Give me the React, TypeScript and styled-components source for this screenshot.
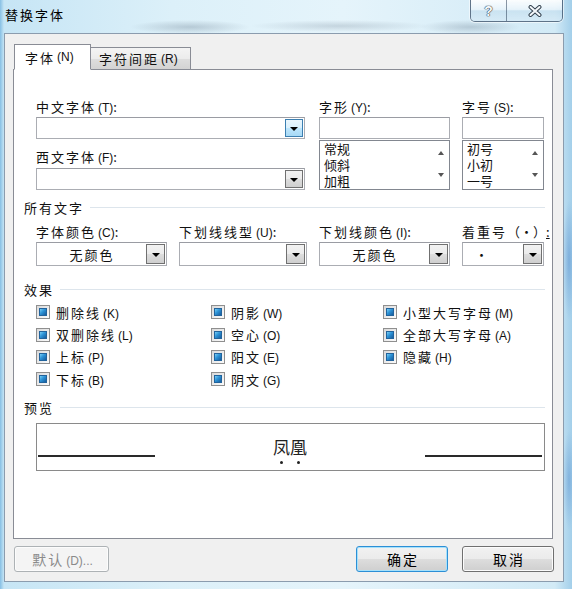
import React from 'react'
import styled, { createGlobalStyle } from 'styled-components'

const GlobalStyle = createGlobalStyle`
	* { box-sizing: border-box; }
	html, body { margin: 0; padding: 0; }
	body {
		font-family: 'Noto Sans CJK SC', 'Liberation Sans', sans-serif;
		color: #111;
		background: #cfe9f6;
	}
`

const Window = styled.div`
	width: 572px;
	height: 589px;
	display: flex;
	flex-direction: column;
	padding: 0 8px 7px 4px;
	overflow: hidden;
	background:
		radial-gradient(ellipse 60px 7px at 190px 27px, rgba(80, 100, 120, 0.28), transparent),
		radial-gradient(ellipse 90px 6px at 340px 26px, rgba(80, 100, 120, 0.22), transparent),
		radial-gradient(ellipse 50px 7px at 470px 27px, rgba(80, 100, 120, 0.26), transparent),
		radial-gradient(ellipse 6px 60px at 569px 260px, rgba(70, 130, 200, 0.45), transparent),
		radial-gradient(ellipse 6px 50px at 569px 480px, rgba(70, 130, 200, 0.4), transparent),
		linear-gradient(90deg, #86bfe4 0, #c6e5f5 4px, #dcf0f9 30%, #e5f4fb 60%, #d2eaf6 97%, #a3cfea 100%);
`

const TitleBar = styled.div`
	height: 33px;
	flex: none;
	display: flex;
	justify-content: space-between;
	align-items: flex-start;
`

const Title = styled.div`
	padding: 6px 0 0 1px;
	font-size: 13px;
	line-height: 18px;
	letter-spacing: 2px;
	color: #000;
`

const CaptionGroup = styled.div`
	display: flex;
	height: 22px;
	margin-right: 1px;
	border: 1px solid rgba(45, 65, 90, 0.7);
	border-top: none;
	border-radius: 0 0 5px 5px;
	overflow: hidden;
	box-shadow: 0 0 0 1px rgba(255, 255, 255, 0.55);
`

const CaptionButton = styled.div<{ $w: number }>`
	width: ${p => p.$w}px;
	display: flex;
	align-items: center;
	justify-content: center;
	background: linear-gradient(180deg, rgba(255, 255, 255, 0.9) 0%, rgba(236, 245, 251, 0.75) 45%, rgba(196, 222, 238, 0.65) 52%, rgba(214, 234, 246, 0.75) 100%);
	& + & { border-left: 1px solid rgba(45, 65, 90, 0.55); }
`

const HelpGlyph = styled.span`
	font-family: 'Liberation Sans', sans-serif;
	font-weight: bold;
	font-size: 14px;
	line-height: 14px;
	color: #f7fafc;
	text-shadow: 0 0 1px #2e3b48, 0 0 1px #2e3b48, 0 0 1px #2e3b48;
`

const Client = styled.div`
	flex: 1;
	display: flex;
	flex-direction: column;
	border: 1px solid #8b9cae;
	background: #f0f0f0;
	padding: 10px 10px 9px 8px;
`

const TabStrip = styled.div`
	height: 26px;
	flex: none;
	display: flex;
	align-items: flex-end;
	padding-left: 1px;
	margin-bottom: -1px;
	position: relative;
	z-index: 1;
`

const Tab = styled.div<{ $active?: boolean }>`
	width: ${p => (p.$active ? 77 : 101)}px;
	height: ${p => (p.$active ? 26 : 22)}px;
	margin-left: ${p => (p.$active ? 0 : -1)}px;
	margin-bottom: ${p => (p.$active ? 0 : 1)}px;
	padding-left: ${p => (p.$active ? 10 : 8)}px;
	display: flex;
	align-items: center;
	border: 1px solid #898c95;
	border-bottom: ${p => (p.$active ? '1px solid #fff' : 'none')};
	background: ${p => (p.$active ? '#fff' : 'linear-gradient(180deg, #f4f4f4 0%, #ececec 50%, #dedede 51%, #d3d3d3 100%)')};
	font-size: 13px;
	letter-spacing: 2px;
	white-space: nowrap;
`

const Panel = styled.div`
	flex: 1;
	display: flex;
	flex-direction: column;
	background: #fff;
	border: 1px solid #898c95;
	padding: 28px 7px 0 10px;
`

const FontGrid = styled.div`
	margin-left: 12px;
	display: grid;
	grid-template-columns: 271px 131px 82px;
	column-gap: 12px;
`

const Stack = styled.div`
	display: flex;
	flex-direction: column;
`

const FieldLabel = styled.div<{ $top?: number }>`
	height: 18px;
	line-height: 18px;
	margin-top: ${p => p.$top ?? 0}px;
	font-size: 13px;
	letter-spacing: 2px;
	white-space: nowrap;
`

const Key = styled.span`
	font-family: 'Liberation Sans', sans-serif;
	font-size: 12px;
	letter-spacing: 0;
	margin-left: 2px;
`

const Tight = styled.span`
	letter-spacing: 0;
`

const Underlined = styled.span`
	text-decoration: underline;
`

const Combo = styled.div<{ $w?: number; $h: number; $top?: number }>`
	width: ${p => (p.$w ? `${p.$w}px` : 'auto')};
	height: ${p => p.$h}px;
	margin-top: ${p => p.$top ?? 1}px;
	display: flex;
	align-items: stretch;
	border: 1px solid #abadb3;
	border-top-color: #9a9ca3;
	background: #fff;
`

const ComboText = styled.div<{ $center?: boolean }>`
	flex: 1;
	display: flex;
	align-items: center;
	justify-content: ${p => (p.$center ? 'center' : 'flex-start')};
	padding-left: ${p => (p.$center ? 2 : 12)}px;
	font-size: 13px;
	letter-spacing: 2px;
`

const DropButton = styled.div<{ $hot?: boolean; $w?: number }>`
	width: ${p => p.$w ?? 19}px;
	margin: 1px;
	display: flex;
	align-items: center;
	justify-content: center;
	border: 1px solid ${p => (p.$hot ? '#3c7fb1' : '#707070')};
	background: ${p =>
		p.$hot
			? 'linear-gradient(180deg, #eaf6fd 0%, #d9f0fc 50%, #bee6fd 51%, #a7d9f5 100%)'
			: 'linear-gradient(180deg, #f2f2f2 0%, #ebebeb 50%, #dddddd 51%, #cfcfcf 100%)'};
	&::after {
		content: '';
		margin-top: 1px;
		border-left: 4px solid transparent;
		border-right: 4px solid transparent;
		border-top: 4px solid #000;
	}
`

const TextBox = styled.div`
	height: 22px;
	margin-top: 1px;
	border: 1px solid #abadb3;
	border-top-color: #9a9ca3;
	background: #fff;
`

const ListBox = styled.div`
	height: 50px;
	margin-top: 1px;
	display: flex;
	border: 1px solid #828790;
	background: #fff;
`

const ListItems = styled.div`
	flex: 1;
	padding: 0 0 0 4px;
	font-size: 13px;
	line-height: 16px;
	overflow: hidden;
`

const ScrollColumn = styled.div`
	width: 17px;
	display: flex;
	flex-direction: column;
	justify-content: space-between;
	align-items: center;
	padding: 10px 0 12px;
`

const ScrollArrow = styled.span<{ $up?: boolean }>`
	border-left: 3.5px solid transparent;
	border-right: 3.5px solid transparent;
	${p => (p.$up ? 'border-bottom' : 'border-top')}: 4px solid #555;
`

const SectionHeader = styled.div<{ $top: number }>`
	height: 20px;
	margin-top: ${p => p.$top}px;
	display: flex;
	align-items: center;
	font-size: 13px;
	letter-spacing: 2px;
	&::after {
		content: '';
		flex: 1;
		height: 1px;
		margin-left: 6px;
		background: #dde5ec;
	}
`

const ColorGrid = styled.div`
	margin: 6px 0 0 12px;
	display: grid;
	grid-template-columns: 131px 128px 131px 82px;
	column-gap: 12px;
`

const EffectsGrid = styled.div`
	margin: 2px 0 0 12px;
	display: grid;
	grid-auto-flow: column;
	grid-template-rows: repeat(4, 22.4px);
	grid-template-columns: 175px 172px auto;
`

const CheckItem = styled.label`
	display: flex;
	align-items: center;
	gap: 6px;
	font-size: 13px;
	letter-spacing: 2px;
	white-space: nowrap;
`

const CheckBox = styled.span`
	width: 14px;
	height: 14px;
	flex: none;
	display: flex;
	padding: 2px;
	border: 1px solid #8f8f8f;
	background: linear-gradient(135deg, #d9d9d9, #fbfbfb);
	&::after {
		content: '';
		flex: 1;
		border: 1px solid #22639c;
		background: linear-gradient(135deg, #79cff5 0%, #2c92d6 45%, #185c9c 100%);
	}
`

const PreviewBox = styled.div`
	height: 48px;
	margin: 5px 0 0 12px;
	display: grid;
	grid-template-columns: 117px 1fr 117px;
	align-items: center;
	padding: 0 2px 0 1px;
	border: 1px solid #8a8a8a;
`

const PreviewRule = styled.div`
	height: 2px;
	margin-top: 18px;
	background: #2a2a2a;
`

const PreviewText = styled.div`
	text-align: center;
	font-size: 17px;
	line-height: 20px;
	color: #222;
`

const EmphasisChar = styled.span`
	position: relative;
	&::after {
		content: '';
		position: absolute;
		left: 50%;
		bottom: -5px;
		width: 3px;
		height: 3px;
		margin-left: -1.5px;
		border-radius: 50%;
		background: #222;
	}
`

const Footer = styled.div`
	height: 26px;
	flex: none;
	margin: 7px -1px 0 0;
	padding-left: 1px;
	display: flex;
	gap: 14px;
`

const PushButton = styled.button<{ $kind?: 'default' | 'disabled' }>`
	width: ${p => (p.$kind === 'disabled' ? 95 : 92)}px;
	height: 26px;
	margin-left: ${p => (p.$kind === 'default' ? 'auto' : '0')};
	padding: 0 0 0 2px;
	border-radius: 3px;
	font-family: 'Noto Sans CJK SC', sans-serif;
	font-size: 14px;
	letter-spacing: 2px;
	color: ${p => (p.$kind === 'disabled' ? '#8a8a8a' : '#000')};
	border: 1px solid ${p => (p.$kind === 'default' ? '#2c8fd6' : p.$kind === 'disabled' ? '#adb2b5' : '#707070')};
	box-shadow: ${p => (p.$kind === 'default' ? 'inset 0 0 0 1px #a6e1fb' : 'inset 0 0 0 1px #fcfcfc')};
	background: ${p =>
		p.$kind === 'disabled'
			? '#f4f4f4'
			: 'linear-gradient(180deg, #f2f2f2 0%, #ebebeb 50%, #dddddd 51%, #cfcfcf 100%)'};
`

const CloseIcon = () => (
	<svg width="14" height="12" viewBox="0 0 14 12">
		<path d="M2.5 2 L11.5 10 M11.5 2 L2.5 10" stroke="#34424f" strokeWidth="4" strokeLinecap="round" fill="none" />
		<path d="M2.5 2 L11.5 10 M11.5 2 L2.5 10" stroke="#f4f8fb" strokeWidth="2" strokeLinecap="round" fill="none" />
	</svg>
)

type LabelProps = { text: string; mnemonic?: string; top?: number }

const Label = ({ text, mnemonic, top }: LabelProps) => (
	<FieldLabel $top={top}>
		{text}
		{mnemonic && <Key>({mnemonic})</Key>}:
	</FieldLabel>
)

const effects: [string, string][] = [
	['删除线', 'K'],
	['双删除线', 'L'],
	['上标', 'P'],
	['下标', 'B'],
	['阴影', 'W'],
	['空心', 'O'],
	['阳文', 'E'],
	['阴文', 'G'],
	['小型大写字母', 'M'],
	['全部大写字母', 'A'],
	['隐藏', 'H'],
]

const ScrollList = ({ items }: { items: string[] }) => (
	<ListBox>
		<ListItems>
			{items.map(item => (
				<div key={item}>{item}</div>
			))}
		</ListItems>
		<ScrollColumn>
			<ScrollArrow $up />
			<ScrollArrow />
		</ScrollColumn>
	</ListBox>
)

export default function App() {
	return (
		<>
			<GlobalStyle />
			<Window>
				<TitleBar>
					<Title>替换字体</Title>
					<CaptionGroup>
						<CaptionButton $w={35}>
							<HelpGlyph>?</HelpGlyph>
						</CaptionButton>
						<CaptionButton $w={56}>
							<CloseIcon />
						</CaptionButton>
					</CaptionGroup>
				</TitleBar>

				<Client>
					<TabStrip>
						<Tab $active>
							字体<Key>(N)</Key>
						</Tab>
						<Tab>
							字符间距<Key>(R)</Key>
						</Tab>
					</TabStrip>

					<Panel>
						<FontGrid>
							<Stack>
								<Label text="中文字体" mnemonic="T" />
								<Combo $w={269} $h={22}>
									<ComboText />
									<DropButton $hot $w={18} />
								</Combo>
								<Label text="西文字体" mnemonic="F" top={9} />
								<Combo $w={269} $h={22} $top={2}>
									<ComboText />
									<DropButton $w={18} />
								</Combo>
							</Stack>
							<Stack>
								<Label text="字形" mnemonic="Y" />
								<TextBox />
								<ScrollList items={['常规', '倾斜', '加粗']} />
							</Stack>
							<Stack>
								<Label text="字号" mnemonic="S" />
								<TextBox />
								<ScrollList items={['初号', '小初', '一号']} />
							</Stack>
						</FontGrid>

						<SectionHeader $top={7}>所有文字</SectionHeader>
						<ColorGrid>
							<Stack>
								<Label text="字体颜色" mnemonic="C" />
								<Combo $h={24}>
									<ComboText $center>无颜色</ComboText>
									<DropButton />
								</Combo>
							</Stack>
							<Stack>
								<Label text="下划线线型" mnemonic="U" />
								<Combo $h={24}>
									<ComboText />
									<DropButton />
								</Combo>
							</Stack>
							<Stack>
								<Label text="下划线颜色" mnemonic="I" />
								<Combo $h={24}>
									<ComboText $center>无颜色</ComboText>
									<DropButton />
								</Combo>
							</Stack>
							<Stack>
								<FieldLabel>
									着重号<Tight>（·）<Underlined>:</Underlined></Tight>
								</FieldLabel>
								<Combo $h={24}>
									<ComboText>·</ComboText>
									<DropButton />
								</Combo>
							</Stack>
						</ColorGrid>

						<SectionHeader $top={13}>效果</SectionHeader>
						<EffectsGrid>
							{effects.map(([name, key]) => (
								<CheckItem key={name}>
									<CheckBox />
									<span>
										{name}
										<Key>({key})</Key>
									</span>
								</CheckItem>
							))}
						</EffectsGrid>

						<SectionHeader $top={7}>预览</SectionHeader>
						<PreviewBox>
							<PreviewRule />
							<PreviewText>
								<EmphasisChar>凤</EmphasisChar>
								<EmphasisChar>凰</EmphasisChar>
							</PreviewText>
							<PreviewRule />
						</PreviewBox>
					</Panel>

					<Footer>
						<PushButton $kind="disabled">
							默认<Key>(D)...</Key>
						</PushButton>
						<PushButton $kind="default">确定</PushButton>
						<PushButton>取消</PushButton>
					</Footer>
				</Client>
			</Window>
		</>
	)
}
